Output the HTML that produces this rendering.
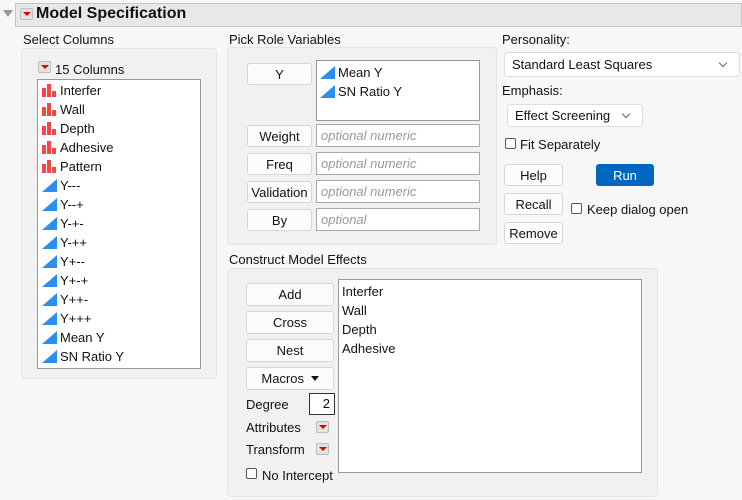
<!DOCTYPE html>
<html><head><meta charset="utf-8"><style>
*{box-sizing:border-box;margin:0;padding:0}
body{width:742px;height:500px;background:#f7f7f7;font-family:"Liberation Sans",sans-serif;font-size:13px;color:#111;position:relative;overflow:hidden}
.a{position:absolute}
.hdr{left:15px;top:3px;width:727px;height:24px;background:#e8e8e8;border:1px solid #c4c4c4}
.panel{background:#f1f1f1;border:1px solid #e4e4e4;border-radius:4px}
.btn{position:absolute;background:#fcfcfc;border:1px solid #d6d6d6;border-radius:3px;text-align:center;line-height:21px;font-size:13px}
.box{position:absolute;background:#fff;border:1px solid #999}
.inp{position:absolute;background:#fff;border:1px solid #aaa;color:#999;font-style:italic;padding-left:4px;line-height:21px;font-size:13px}
.rb{position:absolute;width:13px;height:12px;background:#e2e2e2;border:1px solid #bdbdbd;border-radius:2px}
.rb:after{content:"";position:absolute;left:2px;top:3px;border-left:4px solid transparent;border-right:4px solid transparent;border-top:4px solid #d00}
.row{position:absolute;left:3px;height:19px;line-height:20px;padding-left:19px}
.bar{position:absolute;left:1px;top:3px;width:15px;height:13px}
.bar i{position:absolute;bottom:0;width:4px;background:#f04848}
.tri{position:absolute;left:1px;top:3px;width:0;height:0;border-left:15px solid transparent;border-bottom:13px solid #2a8ff0}
.cb{position:absolute;width:11px;height:11px;border:1px solid #555;border-radius:2px;background:#fff}
.lbl{position:absolute;white-space:nowrap}
.dd{position:absolute;background:#fff;border:1px solid #ddd;border-radius:3px;line-height:23px;padding-left:7px}
.chev{position:absolute;width:6px;height:6px;border-right:1px solid #666;border-bottom:1px solid #666;transform:rotate(45deg)}
</style></head><body>
<div class="a" style="left:3px;top:10px;border-left:5px solid transparent;border-right:5px solid transparent;border-top:7px solid #999"></div>
<div class="a hdr"></div>
<div class="rb" style="left:20px;top:8px"></div>
<div class="lbl" style="left:36px;top:5px;font-size:16px;font-weight:bold">Model Specification</div>

<div class="lbl" style="left:23px;top:32px">Select Columns</div>
<div class="a panel" style="left:21px;top:48px;width:196px;height:331px"></div>
<div class="rb" style="left:38px;top:61px"></div>
<div class="lbl" style="left:55px;top:62px">15 Columns</div>
<div class="box" style="left:37px;top:79px;width:164px;height:290px">
<div class="row" style="top:1px"><span class="bar"><i style="left:0;height:9px"></i><i style="left:5px;height:13px"></i><i style="left:10px;height:6px"></i></span>Interfer</div>
<div class="row" style="top:20px"><span class="bar"><i style="left:0;height:9px"></i><i style="left:5px;height:13px"></i><i style="left:10px;height:6px"></i></span>Wall</div>
<div class="row" style="top:39px"><span class="bar"><i style="left:0;height:9px"></i><i style="left:5px;height:13px"></i><i style="left:10px;height:6px"></i></span>Depth</div>
<div class="row" style="top:58px"><span class="bar"><i style="left:0;height:9px"></i><i style="left:5px;height:13px"></i><i style="left:10px;height:6px"></i></span>Adhesive</div>
<div class="row" style="top:77px"><span class="bar"><i style="left:0;height:9px"></i><i style="left:5px;height:13px"></i><i style="left:10px;height:6px"></i></span>Pattern</div>
<div class="row" style="top:96px"><span class="tri"></span>Y---</div>
<div class="row" style="top:115px"><span class="tri"></span>Y--+</div>
<div class="row" style="top:134px"><span class="tri"></span>Y-+-</div>
<div class="row" style="top:153px"><span class="tri"></span>Y-++</div>
<div class="row" style="top:172px"><span class="tri"></span>Y+--</div>
<div class="row" style="top:191px"><span class="tri"></span>Y+-+</div>
<div class="row" style="top:210px"><span class="tri"></span>Y++-</div>
<div class="row" style="top:229px"><span class="tri"></span>Y+++</div>
<div class="row" style="top:248px"><span class="tri"></span>Mean Y</div>
<div class="row" style="top:267px"><span class="tri"></span>SN Ratio Y</div>
</div>

<div class="lbl" style="left:229px;top:32px">Pick Role Variables</div>
<div class="a panel" style="left:227px;top:47px;width:270px;height:198px"></div>
<div class="btn" style="left:247px;top:63px;width:65px;height:22px">Y</div>
<div class="box" style="left:316px;top:60px;width:164px;height:61px">
<div class="row" style="top:2px;left:2px"><span class="tri"></span>Mean Y</div>
<div class="row" style="top:21px;left:2px"><span class="tri"></span>SN Ratio Y</div>
</div>
<div class="btn" style="left:247px;top:125px;width:65px;height:22px">Weight</div>
<div class="inp" style="left:316px;top:124px;width:164px;height:23px">optional numeric</div>
<div class="btn" style="left:247px;top:153px;width:65px;height:22px">Freq</div>
<div class="inp" style="left:316px;top:152px;width:164px;height:23px">optional numeric</div>
<div class="btn" style="left:247px;top:181px;width:65px;height:22px">Validation</div>
<div class="inp" style="left:316px;top:180px;width:164px;height:23px">optional numeric</div>
<div class="btn" style="left:247px;top:209px;width:65px;height:22px">By</div>
<div class="inp" style="left:316px;top:208px;width:164px;height:23px">optional</div>

<div class="lbl" style="left:502px;top:32px">Personality:</div>
<div class="dd" style="left:504px;top:52px;width:236px;height:25px">Standard Least Squares<span class="chev" style="left:215px;top:7px"></span></div>
<div class="lbl" style="left:502px;top:83px">Emphasis:</div>
<div class="dd" style="left:507px;top:104px;width:136px;height:23px;line-height:22px">Effect Screening<span class="chev" style="left:115px;top:6px"></span></div>
<div class="cb" style="left:505px;top:138px"></div>
<div class="lbl" style="left:520px;top:137px">Fit Separately</div>
<div class="btn" style="left:504px;top:164px;width:59px;height:22px">Help</div>
<div class="btn" style="left:596px;top:164px;width:58px;height:22px;background:#0067c0;border-color:#0067c0;color:#fff">Run</div>
<div class="btn" style="left:504px;top:193px;width:59px;height:22px">Recall</div>
<div class="cb" style="left:571px;top:203px"></div>
<div class="lbl" style="left:587px;top:202px">Keep dialog open</div>
<div class="btn" style="left:504px;top:222px;width:59px;height:22px">Remove</div>

<div class="lbl" style="left:229px;top:252px">Construct Model Effects</div>
<div class="a panel" style="left:227px;top:268px;width:431px;height:229px"></div>
<div class="btn" style="left:246px;top:283px;width:88px;height:23px">Add</div>
<div class="btn" style="left:246px;top:311px;width:88px;height:23px">Cross</div>
<div class="btn" style="left:246px;top:339px;width:88px;height:23px">Nest</div>
<div class="btn" style="left:246px;top:367px;width:88px;height:23px">Macros <span style="display:inline-block;border-left:4px solid transparent;border-right:4px solid transparent;border-top:5px solid #111;vertical-align:2px;margin-left:3px"></span></div>
<div class="lbl" style="left:246px;top:397px">Degree</div>
<div class="a" style="left:309px;top:393px;width:26px;height:22px;background:#fff;border:1px solid #333;text-align:right;padding-right:4px;line-height:20px">2</div>
<div class="lbl" style="left:246px;top:420px">Attributes</div>
<div class="rb" style="left:316px;top:421px"></div>
<div class="lbl" style="left:246px;top:442px">Transform</div>
<div class="rb" style="left:316px;top:443px"></div>
<div class="cb" style="left:246px;top:468px"></div>
<div class="lbl" style="left:262px;top:468px">No Intercept</div>
<div class="box" style="left:338px;top:279px;width:304px;height:194px">
<div class="lbl" style="left:3px;top:4px">Interfer</div>
<div class="lbl" style="left:3px;top:23px">Wall</div>
<div class="lbl" style="left:3px;top:42px">Depth</div>
<div class="lbl" style="left:3px;top:61px">Adhesive</div>
</div>
</body></html>
